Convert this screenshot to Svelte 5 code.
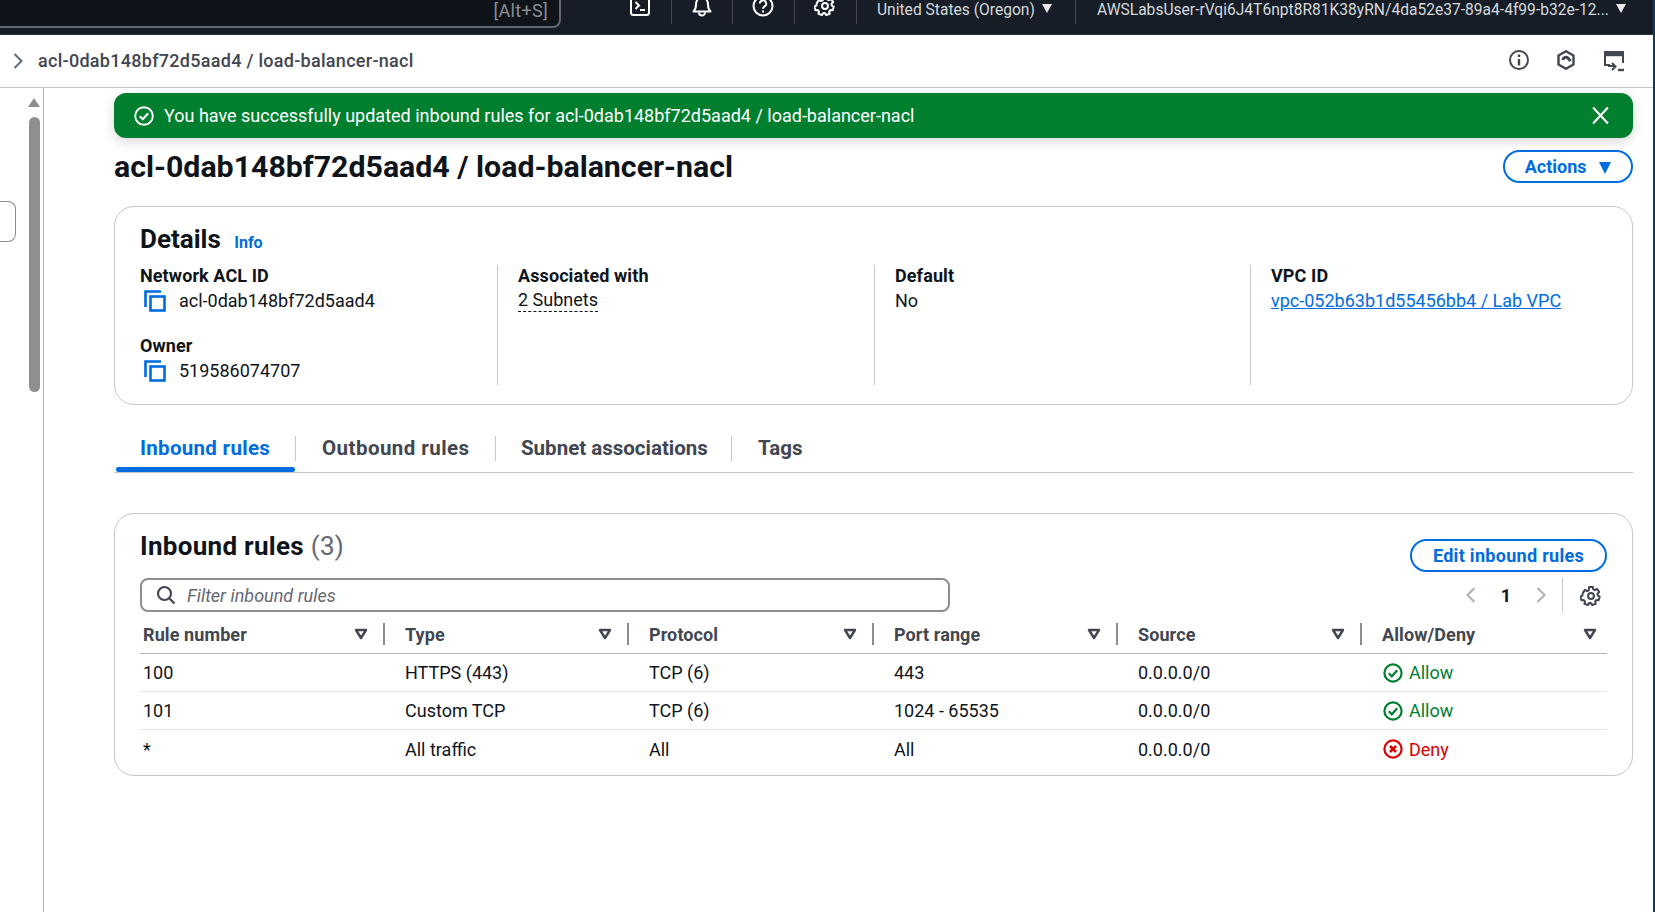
<script>
  const columns = ['Rule number', 'Type', 'Protocol', 'Port range', 'Source', 'Allow/Deny'];
  const rules = [
    { num: '100', type: 'HTTPS (443)', proto: 'TCP (6)', port: '443', source: '0.0.0.0/0', action: 'Allow' },
    { num: '101', type: 'Custom TCP', proto: 'TCP (6)', port: '1024 - 65535', source: '0.0.0.0/0', action: 'Allow' },
    { num: '*', type: 'All traffic', proto: 'All', port: 'All', source: '0.0.0.0/0', action: 'Deny' }
  ];
  const tabs = ['Inbound rules', 'Outbound rules', 'Subnet associations', 'Tags'];
  const gearPath = 'M10 2.2h4l.5 2.6 1.7.8 2.3-1.3 2.4 3.3-1.8 1.9.2 1.9 2.2 1.4-1.1 3.8-2.6-.1-1.2 1.5.5 2.6-3.7 1.3-1.5-2.2h-1.8l-1.5 2.2-3.7-1.3.5-2.6-1.2-1.5-2.6.1-1.1-3.8 2.2-1.4.2-1.9L3.1 8.6l2.4-3.3 2.3 1.3 1.7-.8z';
</script>

{#snippet copyIcon()}
  <svg class="copy" viewBox="0 0 22 22" width="22" height="22" fill="none" stroke="#006ce0" stroke-width="2.6">
    <path d="M1.5 17V1.5H17" />
    <rect x="6.5" y="6.5" width="14" height="14" />
  </svg>
{/snippet}

{#snippet statusIcon(kind)}
  <svg viewBox="0 0 20 20" width="20" height="20" fill="none" stroke="currentColor" stroke-width="2.2">
    <circle cx="10" cy="10" r="8.6" />
    {#if kind === 'Allow'}
      <path d="M5.8 10.3l3 3 5.4-6" />
    {:else}
      <path d="M7 7l6 6M13 7l-6 6" stroke-width="2.6" />
    {/if}
  </svg>
{/snippet}

{#snippet sortIcon()}
  <svg class="sort" viewBox="0 0 14 12" width="14" height="12" fill="none" stroke="#424650" stroke-width="2.4">
    <path d="M2 2h10L7 10z" stroke-linejoin="round" />
  </svg>
{/snippet}

<div class="page">
  <header class="topbar">
    <div class="search"><span>[Alt+S]</span></div>
    <div class="nav-icons">
      <div class="nav-icon">
        <svg viewBox="0 0 22 22" width="22" height="22" fill="none" stroke="#fff" stroke-width="2" style="margin-top:-7px">
          <rect x="2" y="2" width="18" height="18" rx="2.5" />
          <path d="M6.5 7l3.5 3.5L6.5 14M11 15h5" />
        </svg>
      </div>
      <div class="nav-icon">
        <svg viewBox="0 0 22 24" width="22" height="24" fill="none" stroke="#fff" stroke-width="2" style="margin-top:-7px">
          <path d="M2.5 18.5c2-1.800 2.500-3.500 2.500-7 0-4 2.500-7.500 6-7.500s6 3.500 6 7.500c0 3.500.5 5.200 2.500 7z" stroke-linejoin="round" />
          <path d="M8 19.500a3 3 0 0 0 6 0" />
        </svg>
      </div>
      <div class="nav-icon">
        <svg viewBox="0 0 22 22" width="22" height="22" fill="none" stroke="#fff" stroke-width="2" style="margin-top:-5px">
          <circle cx="11" cy="11" r="9.500" />
          <path d="M7.800 8.600a3.200 3.200 0 1 1 4.700 2.800c-1 .6-1.500 1.100-1.500 2.300" />
          <path d="M11 15.500v2" />
        </svg>
      </div>
      <div class="nav-icon">
        <svg viewBox="0 0 24 24" width="22" height="22" fill="none" stroke="#fff" stroke-width="2.200" style="margin-top:-5px">
          <path d={gearPath} stroke-linejoin="round" />
          <circle cx="12" cy="12" r="3.200" />
        </svg>
      </div>
    </div>
    <div class="region">United States (Oregon) <i class="caret"></i></div>
    <div class="user">AWSLabsUser-rVqi6J4T6npt8R81K38yRN/4da52e37-89a4-4f99-b32e-12... <i class="caret"></i></div>
  </header>

  <div class="subbar">
    <svg viewBox="0 0 12 18" width="12" height="18" fill="none" stroke="#5f6b7a" stroke-width="2"><path d="M2.500 2l7 7-7 7" /></svg>
    <span class="crumb">acl-0dab148bf72d5aad4 / load-balancer-nacl</span>
    <div class="sub-icons">
      <svg viewBox="0 0 22 22" width="22" height="22" fill="none" stroke="#424650" stroke-width="2">
        <circle cx="11" cy="11" r="9" />
        <path d="M11 10v6.500M11 5.500v2.500" stroke-width="2.400" />
      </svg>
      <svg viewBox="0 0 22 22" width="22" height="22" fill="none" stroke="#424650" stroke-width="2.400">
        <path d="M11 2.200l7.500 4.300v9L11 19.800l-7.500-4.300v-9z" stroke-linejoin="round" />
        <path d="M8 11a3 3 0 0 1 5-2l2.500 3" stroke-width="3" />
      </svg>
      <svg viewBox="0 0 24 24" width="24" height="24" fill="none" stroke="#424650" stroke-width="2">
        <path d="M8 16H3V3h18v11" />
        <path d="M3 5.500h18" stroke-width="3.400" />
        <path d="M6 11h7M10 8l3.500 3.500L10 15" transform="translate(0 6)" />
        <path d="M16 21h6" stroke-width="2.400" />
      </svg>
    </div>
  </div>

  <div class="body">
    <aside class="rail">
      <div class="rail-stub"></div>
      <div class="scroll">
        <i class="scroll-up"></i>
        <div class="scroll-thumb"></div>
      </div>
    </aside>

    <main class="content">
      <div class="flash">
        <svg viewBox="0 0 20 20" width="20" height="20" fill="none" stroke="#fff" stroke-width="1.900">
          <circle cx="10" cy="10" r="8.800" />
          <path d="M5.800 10.300l3 3 5.400-6" stroke-width="2.100" />
        </svg>
        <span class="flash-text">You have successfully updated inbound rules for acl-0dab148bf72d5aad4 / load-balancer-nacl</span>
        <svg class="flash-close" viewBox="0 0 18 18" width="19" height="19" fill="none" stroke="#fff" stroke-width="2"><path d="M2 1.500l14 15M16 1.500l-14 15" /></svg>
      </div>

      <div class="title-row">
        <h1>acl-0dab148bf72d5aad4 / load-balancer-nacl</h1>
        <button class="btn actions">Actions <i class="caret blue"></i></button>
      </div>

      <section class="card details">
        <h2>Details <a class="info" href="#info">Info</a></h2>
        <div class="cols">
          <div class="col first">
            <div class="label">Network ACL ID</div>
            <div class="value copyable">{@render copyIcon()} acl-0dab148bf72d5aad4</div>
            <div class="label owner">Owner</div>
            <div class="value copyable">{@render copyIcon()} 519586074707</div>
          </div>
          <div class="col">
            <div class="label">Associated with</div>
            <div class="value"><span class="dashed">2 Subnets</span></div>
          </div>
          <div class="col">
            <div class="label">Default</div>
            <div class="value">No</div>
          </div>
          <div class="col">
            <div class="label">VPC ID</div>
            <div class="value"><a class="link" href="#vpc">vpc-052b63b1d55456bb4 / Lab VPC</a></div>
          </div>
        </div>
      </section>

      <nav class="tabs">
        {#each tabs as tab, i}
          <div class="tab" class:active={i === 0}><span>{tab}</span></div>
        {/each}
      </nav>

      <section class="card rules">
        <div class="rules-head">
          <h2>Inbound rules <span class="count">(3)</span></h2>
          <button class="btn edit">Edit inbound rules</button>
        </div>
        <div class="tools">
          <div class="filter">
            <svg viewBox="0 0 20 20" width="20" height="20" fill="none" stroke="#424650" stroke-width="2.200">
              <circle cx="8.500" cy="8.500" r="6.500" />
              <path d="M13.500 13.500l5 5" />
            </svg>
            <span>Filter inbound rules</span>
          </div>
          <div class="pager">
            <svg viewBox="0 0 12 18" width="12" height="18" fill="none" stroke="#b4b4bb" stroke-width="2.200"><path d="M9.500 2l-7 7 7 7" /></svg>
            <b>1</b>
            <svg viewBox="0 0 12 18" width="12" height="18" fill="none" stroke="#b4b4bb" stroke-width="2.200"><path d="M2.500 2l7 7-7 7" /></svg>
          </div>
          <div class="prefs">
            <svg viewBox="0 0 24 24" width="22" height="22" fill="none" stroke="#424650" stroke-width="2.200">
              <path d={gearPath} stroke-linejoin="round" />
              <circle cx="12" cy="12" r="3.200" />
            </svg>
          </div>
        </div>

        <div class="grid head">
          {#each columns as col}
            <div class="th"><span>{col}</span>{@render sortIcon()}</div>
          {/each}
        </div>
        {#each rules as r}
          <div class="grid row">
            <div class="td">{r.num}</div>
            <div class="td">{r.type}</div>
            <div class="td">{r.proto}</div>
            <div class="td">{r.port}</div>
            <div class="td">{r.source}</div>
            <div class="td status" class:deny={r.action === 'Deny'}>{@render statusIcon(r.action)} {r.action}</div>
          </div>
        {/each}
      </section>
    </main>
  </div>
</div>

<style>
  :global(body) {
    margin: 0;
    background: #fff;
  }

  * {
    box-sizing: border-box;
  }

  .page {
    width: 1655px;
    height: 912px;
    overflow: hidden;
    border-right: 2px solid #16375e;
    font-family: Roboto, "Noto Sans", sans-serif;
    font-size: 18px;
    line-height: 25px;
    color: #0f141a;
    display: flex;
    flex-direction: column;
  }

  /* top nav */
  .topbar {
    height: 35px;
    flex: none;
    background: #161d26;
    border-bottom: 1px solid #2a3038;
    display: flex;
    color: #d5d9dd;
    font-size: 15.6px;
  }

  .search {
    width: 561px;
    height: 28px;
    background: #0f141a;
    border-right: 2px solid #656871;
    border-bottom: 2px solid #656871;
    border-bottom-right-radius: 8px;
    padding-right: 11px;
    text-align: right;
    color: #8c8c94;
    line-height: 21px;
    font-size: 18px;
    letter-spacing: 0.3px;
  }

  .nav-icons {
    display: flex;
    margin-left: 49px;
  }

  .nav-icon {
    width: 61.5px;
    height: 24px;
    padding-left: 19px;
    border-right: 1px solid #424650;
  }

  .nav-icon:nth-child(4) {
    border-right: none;
  }

  .region {
    width: 220px;
    height: 24px;
    padding-left: 20px;
    border-left: 1px solid #424650;
    border-right: 1px solid #424650;
    line-height: 20px;
    white-space: nowrap;
  }

  .user {
    padding-left: 21px;
    line-height: 20px;
    white-space: nowrap;
  }

  .caret {
    display: inline-block;
    width: 0;
    height: 0;
    margin-left: 3px;
    vertical-align: 2px;
    border-left: 5px solid transparent;
    border-right: 5px solid transparent;
    border-top: 9px solid #e8e8e8;
  }

  .caret.blue {
    margin-left: 8px;
    border-left-width: 6.5px;
    border-right-width: 6.5px;
    border-top: 12px solid #006ce0;
    vertical-align: -1px;
  }

  /* breadcrumb bar */
  .subbar {
    height: 53px;
    flex: none;
    display: flex;
    align-items: center;
    border-bottom: 1px solid #c6c6cd;
    padding-left: 12px;
  }

  .crumb {
    margin-left: 14px;
    margin-bottom: 1px;
    color: #424650;
    font-weight: 500;
    letter-spacing: 0.28px;
  }

  .sub-icons {
    margin-left: auto;
    margin-right: 27px;
    display: flex;
    gap: 25px;
  }

  .body {
    flex: 1;
    display: flex;
    min-height: 0;
  }

  .rail {
    width: 44px;
    flex: none;
    border-right: 1px solid #b4b4bb;
    display: flex;
    background: #fff;
  }

  .rail-stub {
    width: 16px;
    height: 41px;
    margin-top: 113px;
    border: 1.500px solid #8c8c94;
    border-left: none;
    border-radius: 0 8px 8px 0;
    flex: none;
  }

  .scroll {
    width: 16px;
    margin-left: 10px;
    background: #fff;
    display: flex;
    flex-direction: column;
    align-items: center;
  }

  .scroll-up {
    width: 0;
    height: 0;
    margin-top: 10px;
    border-left: 6.500px solid transparent;
    border-right: 6.500px solid transparent;
    border-bottom: 9px solid #8f8f8f;
  }

  .scroll-thumb {
    width: 11px;
    height: 275px;
    margin-top: 10px;
    background: #8f8f8f;
    border-radius: 6px;
  }

  .content {
    flex: 1;
    padding: 5px 20px 0 70px;
    min-width: 0;
  }

  .flash {
    height: 45px;
    background: #00802f;
    border-radius: 12px;
    color: #fff;
    display: flex;
    align-items: center;
    padding: 0 23px 0 20px;
    box-shadow: 0 4px 12px rgba(0, 7, 22, 0.15);
  }

  .flash-text {
    margin-left: 10px;
    margin-bottom: 1px;
  }

  .flash-close {
    margin-left: auto;
  }

  .title-row {
    height: 68px;
    display: flex;
    align-items: center;
    justify-content: space-between;
    padding-bottom: 11px;
  }

  h1 {
    margin: 0;
    font-size: 30.3px;
    line-height: 38px;
    font-weight: 700;
  }

  h2 {
    margin: 0;
    font-size: 26px;
    line-height: 30px;
    font-weight: 700;
  }

  .btn {
    font: inherit;
    font-weight: 700;
    color: #006ce0;
    background: #fff;
    border: 2px solid #006ce0;
    border-radius: 20px;
    height: 33px;
    padding: 0 20px;
    line-height: 27px;
    white-space: nowrap;
  }

  .card {
    border: 1px solid #c6c6cd;
    border-radius: 20px;
    background: #fff;
  }

  .details {
    height: 199px;
    padding: 17px 25px 0;
  }

  .info {
    font-size: 16px;
    font-weight: 700;
    color: #006ce0;
    text-decoration: none;
    margin-left: 7px;
  }

  .cols {
    display: grid;
    grid-template-columns: 357px 377px 376px 1fr;
    margin-top: 7px;
  }

  .col {
    height: 120px;
    padding-left: 20px;
    border-left: 1px solid #c6c6cd;
  }

  .col.first {
    padding-left: 0;
    border-left: none;
  }

  .label {
    font-weight: 700;
    letter-spacing: 0.1px;
  }

  .label:first-child {
    margin-top: -2px;
  }

  .owner {
    margin-top: 20px;
  }

  .value {
    display: flex;
    align-items: center;
  }

  .copyable {
    padding-left: 4px;
  }

  .copy {
    margin-right: 13px;
  }

  .dashed {
    border-bottom: 1px dashed #0f141a;
    line-height: 23px;
  }

  .link {
    color: #006ce0;
  }

  .tabs {
    height: 68px;
    display: flex;
    align-items: flex-end;
    border-bottom: 1px solid #c6c6cd;
    padding-left: 2px;
  }

  .tab {
    height: 25px;
    position: relative;
    font-size: 20.5px;
    font-weight: 700;
    color: #424650;
    padding-left: 26px;
    margin-bottom: 11px;
    border-right: 1px solid #c6c6cd;
    white-space: nowrap;
    line-height: 25px;
  }

  .tab:nth-child(1) {
    width: 180px;
    padding-left: 24px;
    letter-spacing: 0.3px;
  }

  .tab:nth-child(2) {
    width: 200px;
    letter-spacing: 0.45px;
  }

  .tab:nth-child(3) {
    width: 236px;
    padding-left: 25px;
  }

  .tab:last-child {
    border-right: none;
  }

  .tab.active {
    color: #006ce0;
  }

  .tab.active::after {
    content: '';
    position: absolute;
    left: 0;
    right: 0;
    bottom: -11px;
    height: 5px;
    border-radius: 3px;
    background: #006ce0;
  }

  .rules {
    margin-top: 40px;
    height: 263px;
    padding: 17px 25px 0;
  }

  .rules-head {
    display: flex;
    justify-content: space-between;
    height: 47px;
  }

  .rules-head h2 {
    letter-spacing: 0.3px;
  }

  .count {
    font-weight: 400;
    color: #656871;
  }

  .edit {
    margin-top: 8px;
    width: 197px;
    padding: 0;
    letter-spacing: 0.3px;
  }

  .tools {
    display: flex;
    height: 34px;
    align-items: center;
  }

  .filter {
    width: 810px;
    height: 34px;
    border: 2px solid #8c8c94;
    border-radius: 8px;
    display: flex;
    align-items: center;
    padding-left: 14px;
    color: #656871;
    font-style: italic;
  }

  .filter span {
    margin-left: 11px;
  }

  .pager {
    margin-left: auto;
    display: flex;
    align-items: center;
    gap: 24px;
    padding-right: 15px;
    border-right: 1px solid #c6c6cd;
    height: 34px;
  }

  .prefs {
    width: 44px;
    display: flex;
    justify-content: flex-end;
    padding-right: 5px;
    padding-top: 2px;
  }

  .grid {
    display: grid;
    grid-template-columns: 245px 244px 245px 244px 244px 244px;
  }

  .head {
    height: 39px;
    margin-top: 3px;
    border-bottom: 1px solid #b4b4bb;
    align-items: center;
  }

  .th {
    display: flex;
    align-items: center;
    justify-content: space-between;
    height: 22px;
    padding: 0 15px 0 20px;
    border-right: 2px solid #8c8c94;
    color: #424650;
    font-weight: 700;
    letter-spacing: 0.1px;
  }

  .th:first-child {
    padding-left: 3px;
  }

  .th:last-child {
    border-right: none;
    padding-right: 9px;
  }

  .row {
    height: 38px;
    border-bottom: 1px solid #e5e5e8;
    align-items: center;
  }

  .row:last-child {
    border-bottom: none;
  }

  .td {
    padding-left: 20px;
    white-space: nowrap;
  }

  .td:first-child {
    padding-left: 3px;
  }

  .status {
    display: flex;
    align-items: center;
    gap: 6px;
    color: #00802f;
    padding-left: 21px;
  }

  .status.deny {
    color: #db0000;
  }
</style>
